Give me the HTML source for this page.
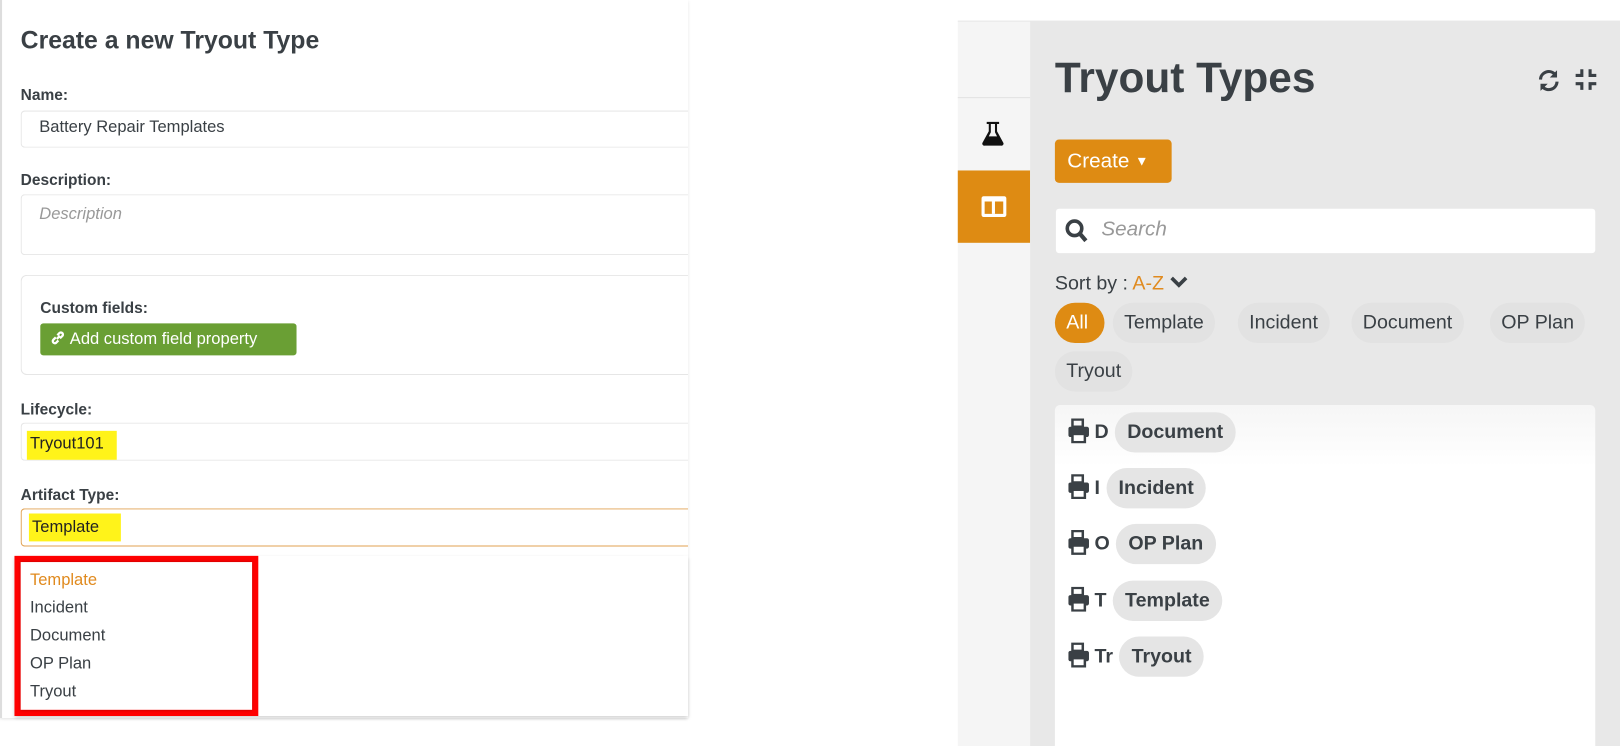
<!DOCTYPE html>
<html><head><meta charset="utf-8"><style>
*{margin:0;padding:0;box-sizing:border-box}
html,body{width:1620px;height:722px;overflow:hidden;background:#fff}
#w{position:absolute;left:0;top:0;width:1568px;height:699px;transform:scale(1.0332);transform-origin:0 0;font-family:"Liberation Sans",sans-serif;color:#3a4045}
.a{position:absolute}
.lbl{position:absolute;left:20px;font-size:15px;font-weight:bold;color:#3a4045}
.inp{position:absolute;left:20px;width:646px;border:1px solid #e6e6e6;border-right:none;border-radius:4px 0 0 4px;background:#fff}
.hl{position:absolute;background:#fff31a;font-size:16px;color:#222;padding-left:3px}
.dd{position:absolute;left:29px;font-size:16px;color:#3a4045}
.chip{position:absolute;height:39px;line-height:39px;border-radius:20px;background:#e2e2e2;font-size:19px;color:#3a4045;padding:0 11px}
.row{position:absolute;left:1034px;font-size:19px;font-weight:bold;color:#3a4045;height:39px;line-height:39px}
.row .c{display:inline-block;background:#e5e5e5;border-radius:20px;padding:0 12px;margin-left:6px}
.pr{display:inline-block;vertical-align:middle;margin-top:-4px}
</style></head><body><div id="w">
<div class="a" style="left:0;top:0;width:666px;height:695px;background:#fff;border-left:2px solid #ddd;box-shadow:0 1px 3px rgba(0,0,0,.15)"></div>
<div class="a" style="left:20px;top:26px;font-size:24px;font-weight:bold;color:#3a4045">Create a new Tryout Type</div>
<div class="lbl" style="top:84px">Name:</div>
<div class="inp" style="top:107px;height:36px"></div>
<div class="a" style="left:38px;top:115px;font-size:16px;color:#3a4045">Battery Repair Templates</div>
<div class="lbl" style="top:166px">Description:</div>
<div class="inp" style="top:188px;height:59px"></div>
<div class="a" style="left:38px;top:199px;font-size:16px;color:#999;font-style:italic">Description</div>
<div class="inp" style="top:266px;height:97px;border-radius:6px 0 0 6px"></div>
<div class="a" style="left:39px;top:290px;font-size:15px;font-weight:bold">Custom fields:</div>
<div class="a" style="left:39px;top:313px;width:248px;height:31px;background:#6a9f34;border-radius:3px;color:#fff;font-size:16px;line-height:31px;padding-left:9px">
<svg width="16" height="16" viewBox="0 0 16 16" style="vertical-align:-2px"><g fill="none" stroke="#fff" stroke-width="2.2"><path d="M7 9 L10 6"/><path d="M6 7.5 L3.5 10 a2 2 0 0 0 2.8 2.8 L8.5 10.5"/><path d="M10 8.5 L12.5 6 a2 2 0 0 0 -2.8 -2.8 L7.5 5.5"/></g></svg> Add custom field property</div>
<div class="lbl" style="top:388px">Lifecycle:</div>
<div class="inp" style="top:409px;height:37px"></div>
<div class="hl" style="left:26px;top:417px;width:87px;height:28px;line-height:26px">Tryout101</div>
<div class="lbl" style="top:471px">Artifact Type:</div>
<div class="inp" style="top:492px;height:37px;border-color:#e0a050"></div>
<div class="hl" style="left:28px;top:497px;width:89px;height:27px;line-height:28px">Template</div>
<div class="a" style="left:14px;top:538px;width:652px;height:155px;background:#fff;box-shadow:0 2px 4px rgba(0,0,0,.2)"></div>
<div class="a" style="left:14px;top:538px;width:236px;height:155px;border:6px solid #ff0000"></div>
<div class="a" style="left:20px;top:544px;width:224px;height:143px;box-shadow:0 0 3px rgba(0,0,0,.3)"></div>
<div class="dd" style="top:553px;color:#e08a1e">Template</div>
<div class="dd" style="top:580px">Incident</div>
<div class="dd" style="top:607px">Document</div>
<div class="dd" style="top:634px">OP Plan</div>
<div class="dd" style="top:661px">Tryout</div>

<div class="a" style="left:927px;top:20px;width:641px;height:702px;border-top:1px solid #e2e2e2"></div>
<div class="a" style="left:927px;top:21px;width:70px;height:701px;background:#f5f5f5"></div>
<div class="a" style="left:927px;top:94px;width:70px;height:1px;background:#e2e2e2"></div>
<svg class="a" style="left:950px;top:117px" width="22" height="25" viewBox="0 0 22 25"><path d="M5 1h12v2h-2v7l6 11a2 2 0 0 1-2 3H3a2 2 0 0 1-2-3l6-11V3H5z" fill="#111"/><path d="M9 3h4v8l2 4H7l2-4z" fill="#f5f5f5"/></svg>
<div class="a" style="left:927px;top:165px;width:70px;height:70px;background:#de8b13"></div>
<div class="a" style="left:950px;top:190px;width:24px;height:20px;border:3px solid #fff;border-top-width:5px;border-radius:2px"><div style="position:absolute;left:7px;top:0;width:3px;height:12px;background:#fff"></div></div>
<div class="a" style="left:997px;top:21px;width:571px;height:701px;background:#e8e8e8"></div>
<div class="a" style="left:1021px;top:52px;font-size:41px;font-weight:bold;color:#3a4045">Tryout Types</div>
<svg class="a" style="left:1487px;top:66px" width="24" height="24" viewBox="0 0 24 24"><g fill="none" stroke="#3a4045" stroke-width="3"><path d="M4 11a8 8 0 0 1 14-5"/><path d="M20 13a8 8 0 0 1-14 5"/></g><path d="M20 2v7h-7z" fill="#3a4045"/><path d="M4 22v-7h7z" fill="#3a4045"/></svg>
<svg class="a" style="left:1524px;top:66px" width="22" height="22" viewBox="0 0 22 22"><g fill="none" stroke="#3a4045" stroke-width="3"><path d="M7 1v6H1M15 1v6h6M7 21v-6H1M15 21v-6h6"/></g></svg>
<div class="a" style="left:1021px;top:135px;width:113px;height:42px;background:#de8b13;border-radius:4px;color:#fff;font-size:20px;line-height:42px;padding-left:12px">Create <span style="font-size:13px;vertical-align:2px">▼</span></div>
<div class="a" style="left:1022px;top:202px;width:522px;height:43px;background:#fff;border-radius:3px"></div>
<svg class="a" style="left:1030px;top:211px" width="24" height="25" viewBox="0 0 24 25"><circle cx="10" cy="10" r="7" fill="none" stroke="#3a4045" stroke-width="3.5"/><path d="M15 15l6 7" stroke="#3a4045" stroke-width="4"/></svg>
<div class="a" style="left:1066px;top:211px;font-size:20px;color:#999;font-style:italic">Search</div>
<div class="a" style="left:1021px;top:264px;font-size:19px;color:#3a4045">Sort by : <span style="color:#e08a1e">A-Z</span> <svg width="18" height="14" viewBox="0 0 18 14"><path d="M2 3l7 7 7-7" fill="none" stroke="#3a4045" stroke-width="3.5"/></svg></div>
<div class="chip" style="left:1021px;top:293px;width:48px;background:#de8b13;color:#fff">All</div>
<div class="chip" style="left:1077px;top:293px">Template</div>
<div class="chip" style="left:1198px;top:293px">Incident</div>
<div class="chip" style="left:1308px;top:293px">Document</div>
<div class="chip" style="left:1442px;top:293px">OP Plan</div>
<div class="chip" style="left:1021px;top:340px">Tryout</div>
<div class="a" style="left:1021px;top:392px;width:523px;height:330px;background:linear-gradient(#f6f6f6,#fff 60px);border-radius:5px 5px 0 0"></div>
<div class="row" style="top:399px"><svg class="pr" width="20" height="24" viewBox="0 0 20 24"><path d="M4 1h10v7H4z" fill="none" stroke="#3a4045" stroke-width="2.4"/><rect x="0" y="8" width="20" height="10" rx="2" fill="#3a4045"/><rect x="4" y="15" width="12" height="8" fill="#fff" stroke="#3a4045" stroke-width="2.4"/></svg> D<span class="c">Document</span></div>
<div class="row" style="top:453px"><svg class="pr" width="20" height="24" viewBox="0 0 20 24"><path d="M4 1h10v7H4z" fill="none" stroke="#3a4045" stroke-width="2.4"/><rect x="0" y="8" width="20" height="10" rx="2" fill="#3a4045"/><rect x="4" y="15" width="12" height="8" fill="#fff" stroke="#3a4045" stroke-width="2.4"/></svg> I<span class="c">Incident</span></div>
<div class="row" style="top:507px"><svg class="pr" width="20" height="24" viewBox="0 0 20 24"><path d="M4 1h10v7H4z" fill="none" stroke="#3a4045" stroke-width="2.4"/><rect x="0" y="8" width="20" height="10" rx="2" fill="#3a4045"/><rect x="4" y="15" width="12" height="8" fill="#fff" stroke="#3a4045" stroke-width="2.4"/></svg> O<span class="c">OP Plan</span></div>
<div class="row" style="top:562px"><svg class="pr" width="20" height="24" viewBox="0 0 20 24"><path d="M4 1h10v7H4z" fill="none" stroke="#3a4045" stroke-width="2.4"/><rect x="0" y="8" width="20" height="10" rx="2" fill="#3a4045"/><rect x="4" y="15" width="12" height="8" fill="#fff" stroke="#3a4045" stroke-width="2.4"/></svg> T<span class="c">Template</span></div>
<div class="row" style="top:616px"><svg class="pr" width="20" height="24" viewBox="0 0 20 24"><path d="M4 1h10v7H4z" fill="none" stroke="#3a4045" stroke-width="2.4"/><rect x="0" y="8" width="20" height="10" rx="2" fill="#3a4045"/><rect x="4" y="15" width="12" height="8" fill="#fff" stroke="#3a4045" stroke-width="2.4"/></svg> Tr<span class="c">Tryout</span></div>
</div></body></html>
